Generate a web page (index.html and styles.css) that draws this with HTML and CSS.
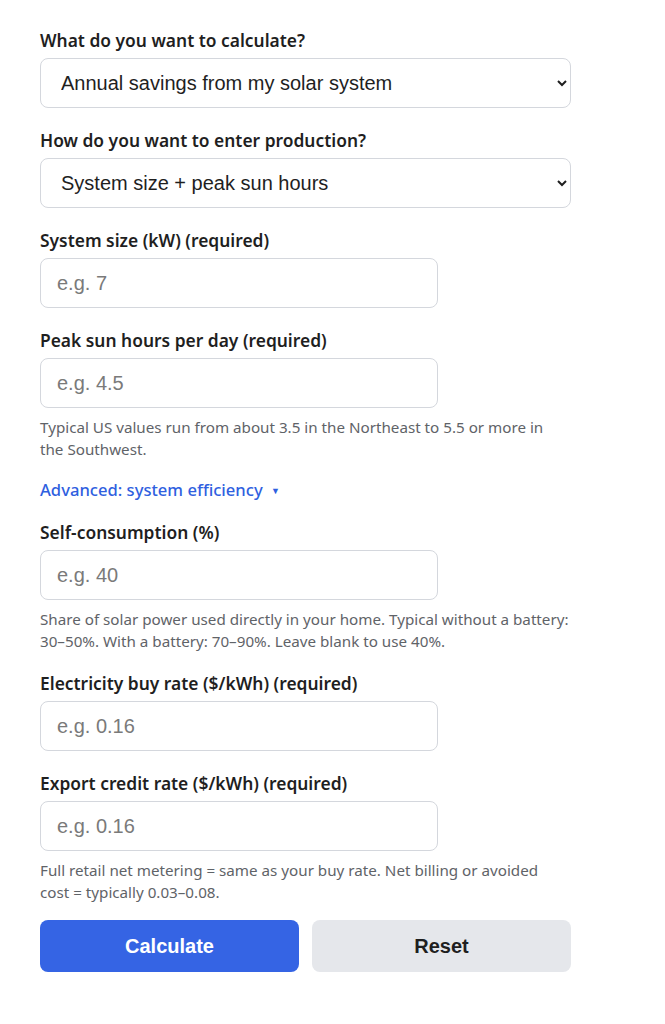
FILE: index.html
```html
<!DOCTYPE html>
<html lang="en">
<head>
<meta charset="utf-8">
<title>Solar savings calculator</title>
<link rel="stylesheet" href="styles.css">
</head>
<body>
<form class="calc">
  <div class="field">
    <label class="label" for="mode">What do you want to calculate?</label>
    <select id="mode" class="control select">
      <option>Annual savings from my solar system</option>
    </select>
  </div>
  <div class="field">
    <label class="label" for="entry">How do you want to enter production?</label>
    <select id="entry" class="control select">
      <option>System size + peak sun hours</option>
    </select>
  </div>
  <div class="field">
    <label class="label" for="size">System size (kW) (required)</label>
    <input id="size" class="control input" placeholder="e.g. 7">
  </div>
  <div class="field field-help">
    <label class="label" for="sun">Peak sun hours per day (required)</label>
    <input id="sun" class="control input" placeholder="e.g. 4.5">
    <p class="help">Typical US values run from about 3.5 in the Northeast to 5.5 or more in the&nbsp;Southwest.</p>
  </div>
  <div class="field field-link">
    <a class="advanced" href="#">Advanced: system efficiency <span class="caret">▼</span></a>
  </div>
  <div class="field field-help">
    <label class="label" for="self">Self-consumption (%)</label>
    <input id="self" class="control input" placeholder="e.g. 40">
    <p class="help">Share of solar power used directly in your home. Typical without a battery: 30–50%. With a battery: 70–90%. Leave blank to use 40%.</p>
  </div>
  <div class="field">
    <label class="label" for="buy">Electricity buy rate ($/kWh) (required)</label>
    <input id="buy" class="control input" placeholder="e.g. 0.16">
  </div>
  <div class="field field-help">
    <label class="label" for="exp">Export credit rate ($/kWh) (required)</label>
    <input id="exp" class="control input" placeholder="e.g. 0.16">
    <p class="help">Full retail net metering = same as your buy rate. Net billing or avoided cost = typically 0.03–0.08.</p>
  </div>
  <div class="actions">
    <button type="button" class="btn btn-primary">Calculate</button>
    <button type="button" class="btn btn-secondary">Reset</button>
  </div>
</form>
</body>
</html>
```
FILE: styles.css
```css
html, body {
  margin: 0;
  padding: 0;
  background: #ffffff;
}
body {
  font-family: "Noto Sans", "Open Sans", sans-serif;
  color: #1f1f1f;
}
.calc {
  width: 531px;
  padding: 28px 0 40px 40px;
  display: flex;
  flex-direction: column;
}
.field {
  display: flex;
  flex-direction: column;
  margin-bottom: 20px;
}
.field-help {
  margin-bottom: 19px;
}
.field-link {
  margin-bottom: 18px;
}
.label {
  font-size: 17.4px;
  font-weight: 600;
  line-height: 24px;
  margin-bottom: 6px;
  color: #1f1f1f;
}
.control {
  box-sizing: border-box;
  height: 50px;
  border: 1px solid #d4d7dd;
  border-radius: 8px;
  background: #ffffff;
  font-family: "Liberation Sans", Arial, sans-serif;
  font-size: 20px;
  color: #1f1f1f;
}
.select {
  width: 531px;
  padding: 0 8px 0 16px;
}
.input {
  width: 398px;
  padding: 0 16px;
}
.input::placeholder {
  color: #7a7a7a;
}
.help {
  margin: 8px 0 0;
  font-size: 15.2px;
  line-height: 22px;
  color: #5f6368;
  width: 531px;
}
.advanced {
  color: #2f5fe0;
  text-decoration: none;
  font-size: 16.6px;
  line-height: 22px;
  font-weight: 500;
}
.caret {
  font-size: 9px;
  vertical-align: 2px;
  margin-left: 4px;
}
.actions {
  display: flex;
  gap: 13px;
  margin-top: -2px;
}
.btn {
  flex: 1;
  height: 52px;
  border: none;
  border-radius: 8px;
  font-family: "Liberation Sans", Arial, sans-serif;
  font-size: 20px;
  font-weight: 700;
}
.btn-primary {
  background: #3564e4;
  color: #ffffff;
}
.btn-secondary {
  background: #e5e7eb;
  color: #1f1f1f;
}
```
